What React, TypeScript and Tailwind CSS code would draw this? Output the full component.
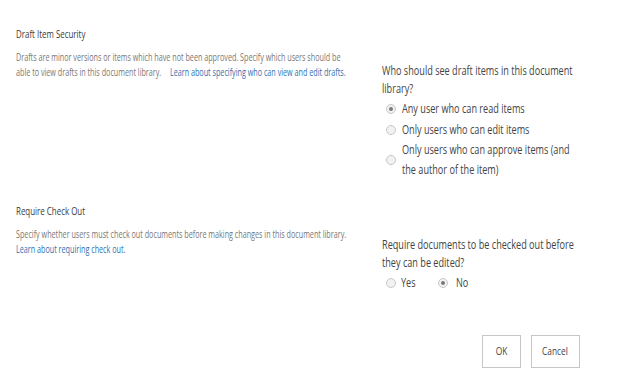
import React from 'react'

const font = { fontFamily: '"Open Sans", "Liberation Sans", sans-serif' }

// the screenshot's text is horizontally compressed, so each line is squeezed with scale-x
function Line({ className = '', children }: { className?: string; children: React.ReactNode }) {
    return <div className={`origin-left whitespace-nowrap ${className}`}>{children}</div>
}

function Radio({ checked }: { checked?: boolean }) {
    return (
        <span className="flex h-[10px] w-[10px] shrink-0 items-center justify-center rounded-full border border-[#c8c8c8] bg-[#f2f2f2]">
            {checked && <span className="h-[4px] w-[4px] rounded-full bg-[#7a7a7a]" />}
        </span>
    )
}

export default function App() {
    return (
        <div className="h-[382px] w-[623px] overflow-hidden bg-white" style={font}>
            {/* Draft Item Security */}
            <div className="flex pt-[26px]">
                <div className="w-[382px] shrink-0 pl-4">
                    <Line className="scale-x-[0.69] text-[11.5px] leading-[16px] text-[#3a3a3a]">Draft Item Security</Line>
                    <div className="mt-[8px] text-[10px] leading-[15px] text-[#777]">
                        <Line className="scale-x-[0.72]">
                            Drafts are minor versions or items which have not been approved. Specify which users should be
                        </Line>
                        <Line className="scale-x-[0.72]">
                            able to view drafts in this document library.
                            <span className="ml-[12px] text-[#2f6fb0]">Learn about specifying who can view and edit drafts.</span>
                        </Line>
                    </div>
                </div>
                <div className="mt-[36px] text-[12px] leading-[18px] text-[#444]">
                    <Line className="scale-x-[0.76]">Who should see draft items in this document</Line>
                    <Line className="scale-x-[0.76]">library?</Line>
                    <div className="leading-[21px]">
                        <div className="flex items-center gap-[6px] pl-[4px]">
                            <Radio checked />
                            <Line className="scale-x-[0.76]">Any user who can read items</Line>
                        </div>
                        <div className="flex items-center gap-[6px] pl-[4px]">
                            <Radio />
                            <Line className="scale-x-[0.76]">Only users who can edit items</Line>
                        </div>
                        <div className="flex items-center gap-[6px] pl-[4px] leading-[20px]">
                            <Radio />
                            <div>
                                <Line className="scale-x-[0.76]">Only users who can approve items (and</Line>
                                <Line className="scale-x-[0.76]">the author of the item)</Line>
                            </div>
                        </div>
                    </div>
                </div>
            </div>

            {/* Require Check Out */}
            <div className="flex pt-[23px]">
                <div className="w-[382px] shrink-0 pl-4">
                    <Line className="scale-x-[0.69] text-[11.5px] leading-[16px] text-[#3a3a3a]">Require Check Out</Line>
                    <div className="mt-[8px] text-[10px] leading-[15px] text-[#777]">
                        <Line className="scale-x-[0.72]">
                            Specify whether users must check out documents before making changes in this document library.
                        </Line>
                        <Line className="scale-x-[0.72] text-[#2f6fb0]">Learn about requiring check out.</Line>
                    </div>
                </div>
                <div className="mt-[33px] text-[12px] leading-[18px] text-[#444]">
                    <Line className="scale-x-[0.76]">Require documents to be checked out before</Line>
                    <Line className="scale-x-[0.76]">they can be edited?</Line>
                    <div className="flex leading-[21px]">
                        <div className="flex w-[56px] items-center gap-[5px] pl-[4px]">
                            <Radio />
                            <Line className="scale-x-[0.76]">Yes</Line>
                        </div>
                        <div className="flex items-center gap-[8px]">
                            <Radio checked />
                            <Line className="scale-x-[0.76]">No</Line>
                        </div>
                    </div>
                </div>
            </div>

            {/* Buttons */}
            <div className="mt-[42px] flex justify-end gap-[10px] pr-[43px]">
                <button className="flex h-[33px] w-[39px] items-center justify-center border border-[#c6c6c6] bg-white text-[11px] text-[#444]">
                    <span className="scale-x-[0.76]">OK</span>
                </button>
                <button className="flex h-[33px] w-[49px] items-center justify-center border border-[#c6c6c6] bg-white text-[11px] text-[#444]">
                    <span className="scale-x-[0.76]">Cancel</span>
                </button>
            </div>
        </div>
    )
}
